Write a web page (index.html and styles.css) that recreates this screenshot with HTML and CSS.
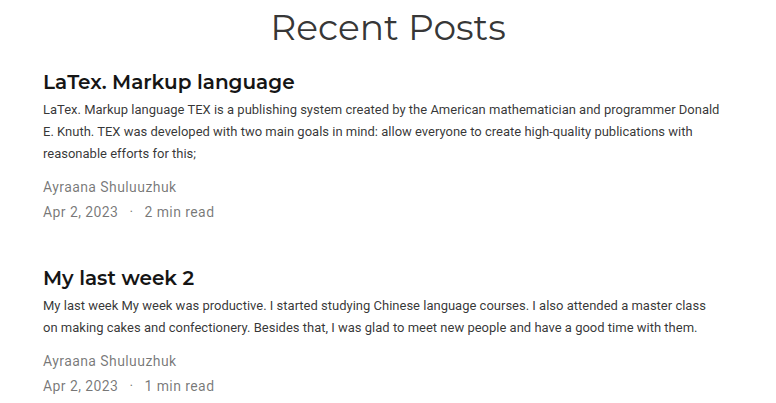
FILE: index.html
```html
<!DOCTYPE html>
<html lang="en">
<head>
<meta charset="utf-8">
<meta name="viewport" content="width=device-width, initial-scale=1">
<title>Recent Posts</title>
<link rel="stylesheet" href="styles.css">
</head>
<body>
<main class="posts">
  <h1 class="posts-title">Recent Posts</h1>
  <article class="post">
    <h2 class="post-title"><a href="#latex">LaTex. Markup language</a></h2>
    <p class="post-summary">LaTex. Markup language TEX is a publishing system created by the American mathematician and programmer Donald E. Knuth. TEX was developed with two main goals in mind: allow everyone to create high-quality publications with reasonable efforts for this;</p>
    <div class="post-meta">
      <div>Ayraana Shuluuzhuk</div>
      <div class="post-details"><span>Apr 2, 2023</span><span>·</span><span>2 min read</span></div>
    </div>
  </article>
  <article class="post">
    <h2 class="post-title"><a href="#week-2">My last week 2</a></h2>
    <p class="post-summary">My last week My week was productive. I started studying Chinese language courses. I also attended a master class on making cakes and confectionery. Besides that, I was glad to meet new people and have a good time with them.</p>
    <div class="post-meta">
      <div>Ayraana Shuluuzhuk</div>
      <div class="post-details"><span>Apr 2, 2023</span><span>·</span><span>1 min read</span></div>
    </div>
  </article>
</main>
</body>
</html>
```

FILE: styles.css
```css
body {
  margin: 0;
  background: #fff;
  color: rgba(0, 0, 0, 0.8);
  font-family: Roboto, sans-serif;
}

.posts {
  padding: 5px 43px 0;
}

.posts-title {
  margin: 0 0 20px;
  font: 400 36px/44px Montserrat, Lato, sans-serif;
  text-align: center;
}

.post + .post {
  margin-top: 40px;
}

.post-title {
  margin: 0 0 4px;
  font: 650 20px/26px Montserrat, "Open Sans", sans-serif;
}

.post-title a {
  color: #151515;
  text-decoration: none;
}

.post-summary {
  margin: 0;
  padding-right: 12px;
  font-size: 13px;
  line-height: 22px;
}

.post-meta {
  margin-top: 10px;
  color: rgba(0, 0, 0, 0.54);
  font-size: 14px;
  line-height: 25px;
  letter-spacing: 0.03em;
}

.post-details {
  display: flex;
  gap: 11px;
}
```
